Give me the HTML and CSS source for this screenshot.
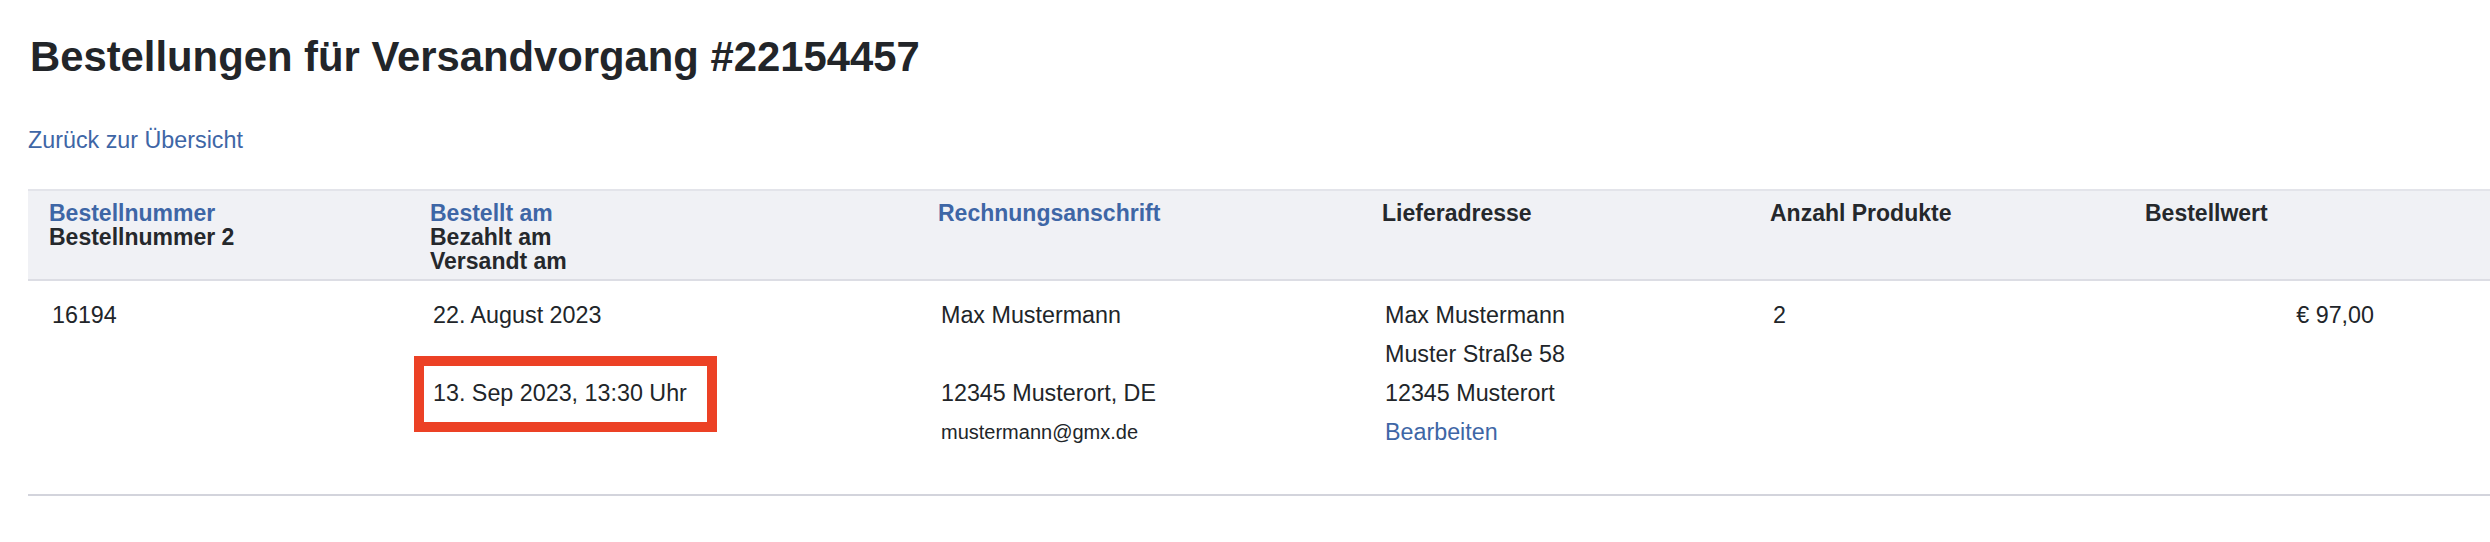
FILE: index.html
```html
<!DOCTYPE html>
<html lang="de">
<head>
<meta charset="utf-8">
<title>Bestellungen für Versandvorgang #22154457</title>
<link rel="stylesheet" href="styles.css">
</head>
<body>
<main class="page">
  <h1 class="title">Bestellungen für Versandvorgang #22154457</h1>
  <a class="back" href="#">Zurück zur Übersicht</a>
  <table class="orders">
    <colgroup>
      <col class="c-nr">
      <col class="c-date">
      <col class="c-bill">
      <col class="c-ship">
      <col class="c-qty">
      <col class="c-val">
      <col class="c-rest">
    </colgroup>
    <thead>
      <tr>
        <th><a class="sort" href="#">Bestellnummer</a><span class="line">Bestellnummer 2</span></th>
        <th><a class="sort" href="#">Bestellt am</a><span class="line">Bezahlt am</span><span class="line">Versandt am</span></th>
        <th><a class="sort" href="#">Rechnungsanschrift</a></th>
        <th>Lieferadresse</th>
        <th>Anzahl Produkte</th>
        <th>Bestellwert</th>
        <th></th>
      </tr>
    </thead>
    <tbody>
      <tr>
        <td>16194</td>
        <td>
          <span class="line">22. August 2023</span>
          <span class="line">&nbsp;</span>
          <span class="line"><span class="marked">13. Sep 2023, 13:30 Uhr</span></span>
        </td>
        <td>
          <span class="line">Max Mustermann</span>
          <span class="line">&nbsp;</span>
          <span class="line">12345 Musterort, DE</span>
          <span class="line small">mustermann@gmx.de</span>
        </td>
        <td>
          <span class="line">Max Mustermann</span>
          <span class="line">Muster Straße 58</span>
          <span class="line">12345 Musterort</span>
          <span class="line"><a class="edit" href="#">Bearbeiten</a></span>
        </td>
        <td>2</td>
        <td class="num">€ 97,00</td>
        <td></td>
      </tr>
    </tbody>
  </table>
</main>
</body>
</html>
```

FILE: styles.css
```css
html, body {
  margin: 0;
  padding: 0;
  background: #ffffff;
}

body {
  font-family: "Liberation Sans", Arial, Helvetica, sans-serif;
  color: #212529;
  font-size: 23.3px;
}

.page {
  padding: 33px 0 0 28px;
}

.title {
  margin: 0 0 0 2px;
  font-size: 41.8px;
  line-height: 48px;
  font-weight: bold;
  color: #222529;
}

.back {
  display: block;
  margin-top: 44px;
  font-size: 23.3px;
  line-height: 30px;
  color: #3e66a6;
  text-decoration: none;
}

.orders {
  margin-top: 34px;
  width: 100%;
  border-collapse: collapse;
  table-layout: fixed;
}

.c-nr { width: 381px; }
.c-date { width: 508px; }
.c-bill { width: 444px; }
.c-ship { width: 388px; }
.c-qty { width: 375px; }
.c-val { width: 274px; }
.c-rest { width: auto; }

.orders th {
  background: #f0f1f5;
  border-top: 2px solid #e3e4ea;
  border-bottom: 2px solid #dcdde4;
  padding: 10px 24px 6px 21px;
  text-align: left;
  vertical-align: top;
  font-size: 23px;
  line-height: 24px;
  font-weight: bold;
  color: #25282c;
}

.orders th .sort {
  display: block;
  color: #3e66a6;
  text-decoration: none;
}

.orders .line {
  display: block;
}

.orders td {
  padding: 15px 24px 42px 24px;
  vertical-align: top;
  text-align: left;
  font-size: 23.3px;
  line-height: 39px;
  border-bottom: 2px solid #d3d4dc;
  color: #212529;
}

.orders td.num {
  text-align: right;
}

.orders .small {
  font-size: 20px;
}

.edit {
  color: #3e66a6;
  text-decoration: none;
}

.marked {
  position: relative;
  display: inline-block;
}

.marked::after {
  content: "";
  position: absolute;
  top: -18px;
  left: -19px;
  width: 303px;
  height: 76px;
  box-sizing: border-box;
  border: 10px solid #ec4125;
}
```
